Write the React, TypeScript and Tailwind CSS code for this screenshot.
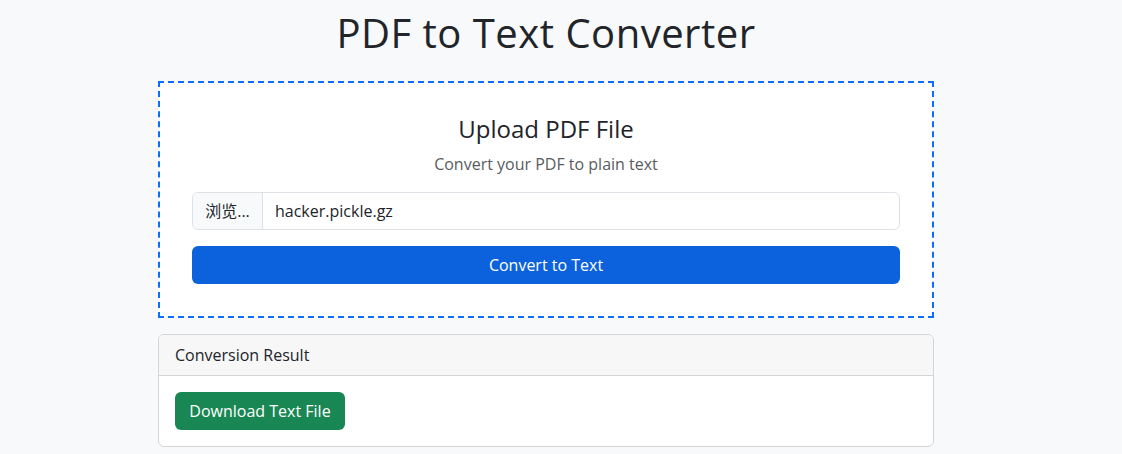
const font = {
  fontFamily: '"Open Sans", "Noto Sans CJK SC", sans-serif',
};

const UploadCard = () => {
  return (
    <div className="mb-4 border-2 border-dashed border-[#0d6efd] bg-white p-8 text-center">
      <h4 className="mb-2 text-[24px] leading-[1.2] font-normal">
        Upload PDF File
      </h4>
      <p className="mb-4 text-[16px] leading-6 text-[#595c5f]">
        Convert your PDF to plain text
      </p>
      <div className="mb-4 flex h-[38px] overflow-hidden rounded-[6px] border border-[#dee2e6] text-left">
        <span className="flex w-[70px] items-center justify-center border-r border-[#dee2e6] bg-[#f8f9fa] text-[16px]">
          浏览...
        </span>
        <span className="flex flex-1 items-center px-3 text-[16px]">
          hacker.pickle.gz
        </span>
      </div>
      <button className="h-[38px] w-full rounded-[6px] bg-[#0b62dc] text-[16px] text-white">
        Convert to Text
      </button>
    </div>
  );
};

const ResultCard = () => {
  return (
    <div className="overflow-hidden rounded-[6px] border border-[#d5d5d5] bg-white">
      <div className="border-b border-[#d5d5d5] bg-[#f7f7f7] px-4 py-2 text-[16px] leading-6">
        Conversion Result
      </div>
      <div className="p-4">
        <button className="h-[38px] w-[170px] rounded-[6px] bg-[#198754] text-[16px] text-white">
          Download Text File
        </button>
      </div>
    </div>
  );
};

export default function App() {
  return (
    <div
      className="min-h-[454px] bg-[#f8f9fa] pt-[9px] pl-[158px] text-[#212529]"
      style={font}
    >
      <div className="w-[776px]">
        <h1 className="mb-6 text-center text-[40px] leading-[48px] font-normal tracking-[0.5px]">
          PDF to Text Converter
        </h1>
        <UploadCard />
        <ResultCard />
      </div>
    </div>
  );
}
